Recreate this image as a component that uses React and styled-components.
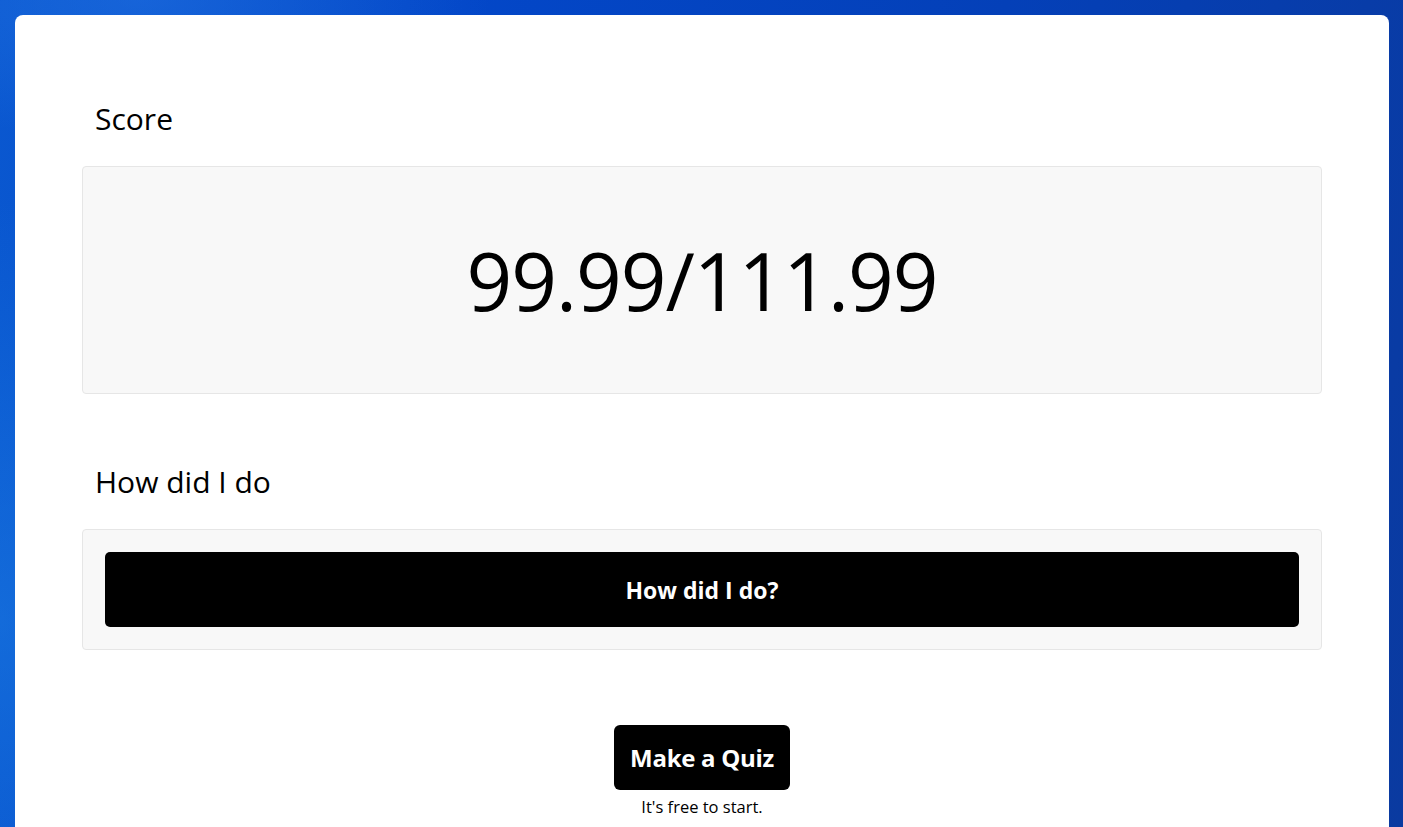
import React from 'react';
import styled, { createGlobalStyle } from 'styled-components';

// Page background: blue wallpaper behind the white sheet
const GlobalStyle = createGlobalStyle`
    html, body {
        margin: 0;
        height: 100%;
        overflow: hidden;
    }
    body {
        font-family: "Open Sans", "Noto Sans", sans-serif;
        color: #000;
        background:
            radial-gradient(ellipse 420px 600px at 0% 75%, rgba(30, 130, 230, 0.5), transparent 70%),
            radial-gradient(ellipse 500px 200px at 10% 0%, rgba(40, 120, 230, 0.45), transparent 70%),
            linear-gradient(100deg, #0a58d0 0%, #0347c8 30%, #0440b8 65%, #0a3aa0 100%);
    }
    #root {
        padding: 15px 14px 0 15px;
    }
`;

// White sheet that holds the results
const Sheet = styled.main`
    background: #fff;
    border-radius: 8px 8px 0 0;
    min-height: 840px;
    padding: 84px 67px 0;
    box-sizing: border-box;
`;

const SectionTitle = styled.h2`
    margin: ${p => (p.$first ? '0' : '68px')} 0 27px;
    padding-left: 13px;
    font-size: 30px;
    font-weight: 400;
    line-height: 40px;
`;

const Panel = styled.section`
    background: #f8f8f8;
    border: 1px solid #e6e6e6;
    border-radius: 4px;
    box-sizing: border-box;
    padding: 22px;
`;

const ScorePanel = styled(Panel)`
    height: 228px;
    display: flex;
    align-items: center;
    justify-content: center;
`;

const ScoreValue = styled.div`
    font-size: 80px;
    letter-spacing: -1px;
    line-height: 1;
`;

const WideButton = styled.button`
    display: flex;
    width: 100%;
    height: 75px;
    align-items: center;
    justify-content: center;
    border: none;
    border-radius: 5px;
    background: #000;
    color: #fff;
    font-family: inherit;
    font-size: 23px;
    font-weight: 700;
    cursor: pointer;
`;

const Footer = styled.div`
    display: flex;
    flex-direction: column;
    align-items: center;
    margin-top: 75px;
`;

const QuizButton = styled.button`
    height: 65px;
    padding: 0 16px;
    border: none;
    border-radius: 6px;
    background: #000;
    color: #fff;
    font-family: inherit;
    font-size: 24px;
    font-weight: 700;
    letter-spacing: -0.3px;
    cursor: pointer;
`;

const Note = styled.p`
    margin: 7px 0 0;
    font-size: 16.5px;
    line-height: 20px;
`;

const App = () => {
    const score = { got: '99.99', total: '111.99' };

    return (
        <>
            <GlobalStyle />
            <Sheet>
                {/* Score */}
                <SectionTitle $first>Score</SectionTitle>
                <ScorePanel>
                    <ScoreValue>{score.got}/{score.total}</ScoreValue>
                </ScorePanel>

                {/* Feedback */}
                <SectionTitle>How did I do</SectionTitle>
                <Panel>
                    <WideButton type="button">How did I do?</WideButton>
                </Panel>

                <Footer>
                    <QuizButton type="button">Make a Quiz</QuizButton>
                    <Note>It's free to start.</Note>
                </Footer>
            </Sheet>
        </>
    );
};

export default App;
